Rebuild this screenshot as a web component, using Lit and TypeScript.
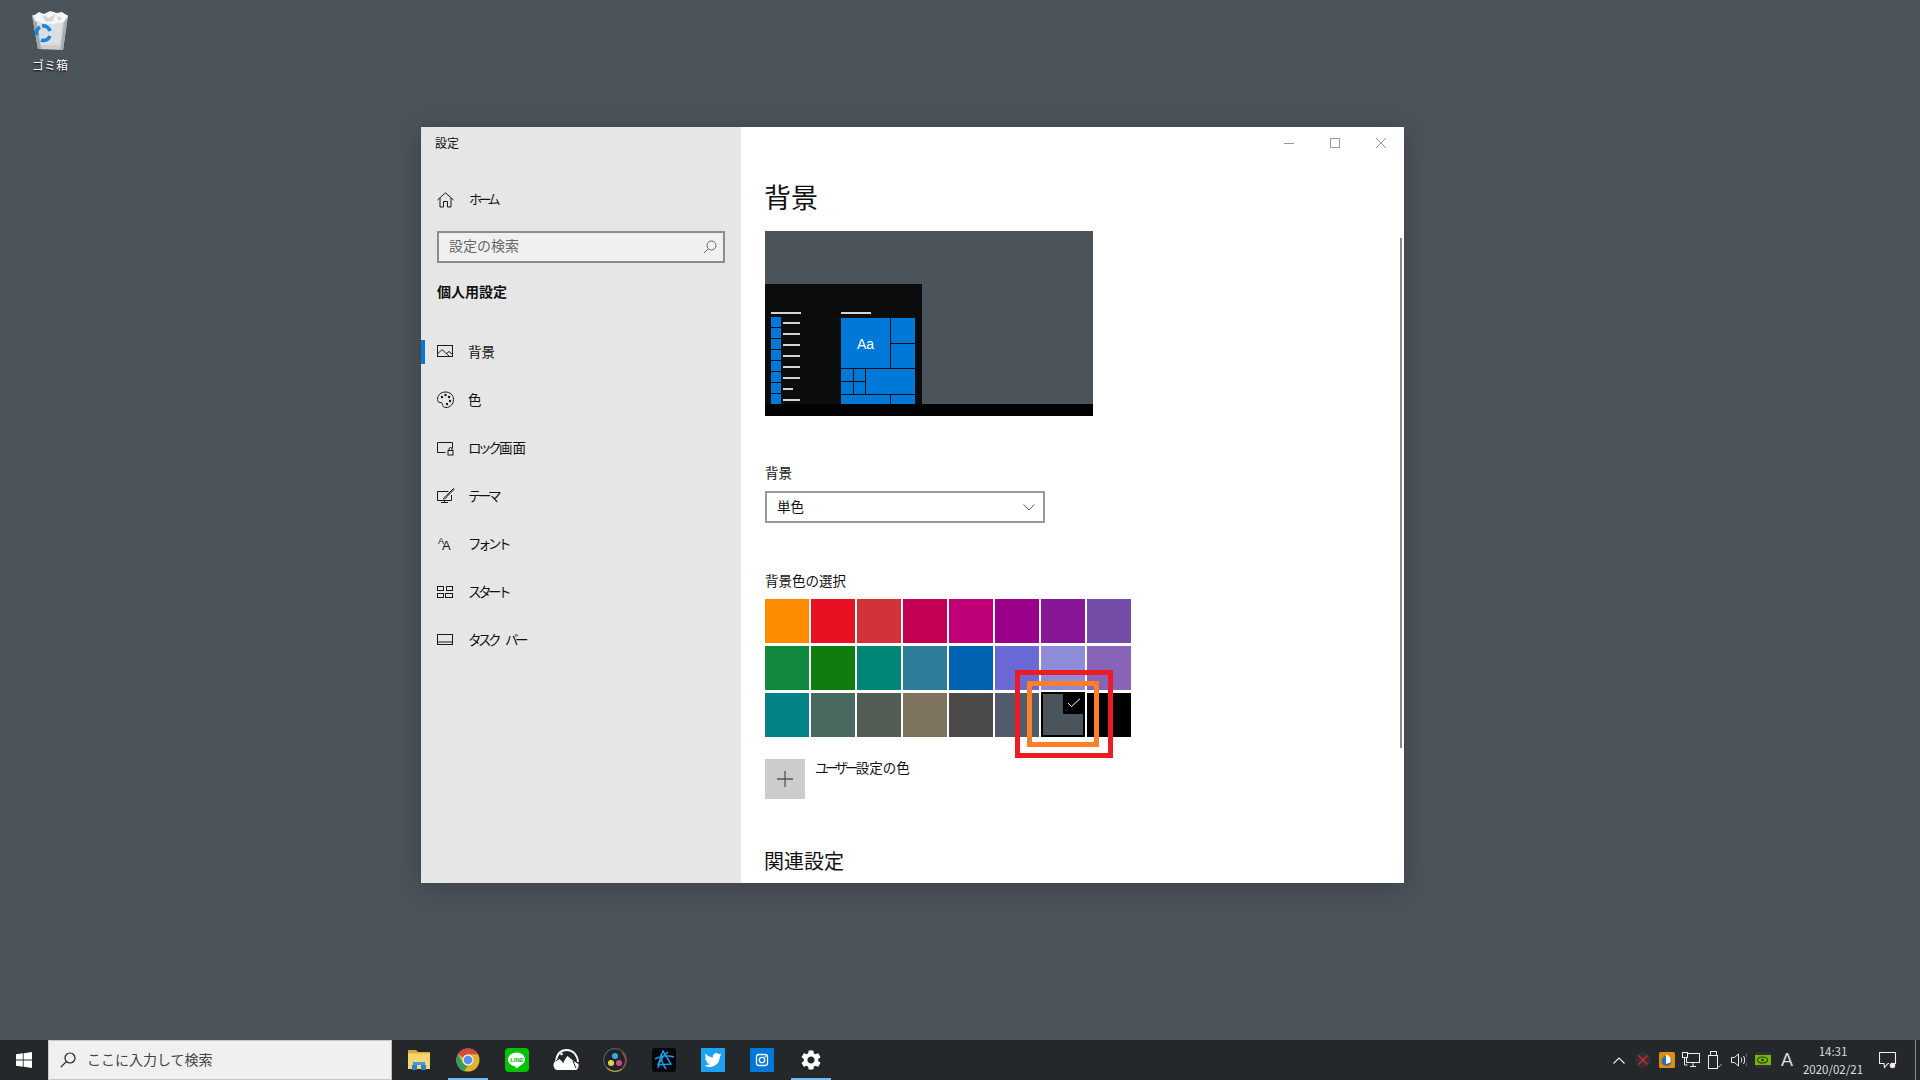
import { LitElement, html, css, svg } from "lit";
import { customElement } from "lit/decorators.js";

const SWATCHES = [
  "#ff8c00","#e81123","#d13438","#c30052","#bf0077","#9a0089","#881798","#744da9",
  "#10893e","#107c10","#018574","#2d7d9a","#0063b1","#6b69d6","#8e8cd8","#8764b8",
  "#038387","#486860","#525e54","#7e735f","#4c4a48","#515c6b","#4c545b","#000000",
];
const ic = (w: number, h: number, body: unknown) =>
  html`<svg width=${w} height=${h} viewBox="0 0 ${w} ${h}" fill="none" stroke="#1a1a1a" stroke-width="1">${body}</svg>`;

const NAV = [
  { label: html`背景`, active: true, icon: ic(18, 14, svg`<rect x=".5" y=".5" width="15" height="11"/><path d="M.5 9 5 4.500l7 6.500M9.500 8.500 12 6.500l3.500 3"/>`) },
  { label: html`色`, active: false, icon: ic(18, 18, svg`<path d="M8.500 1C4 1 .5 4 .5 8.500c0 2 1 3 2.500 3 1.700 0 2.500.5 2.500 2 0 2 1.500 3 3.500 3 4.500 0 7.500-3.500 7.500-8C16.500 4 13 1 8.500 1Z"/><g fill="#1a1a1a" stroke="none"><circle cx="5" cy="6" r="1.200"/><circle cx="8.500" cy="4" r="1.200"/><circle cx="12" cy="6" r="1.200"/><circle cx="13" cy="10" r="1.200"/><circle cx="10" cy="13" r="1.200"/></g>`) },
  { label: html`<span class="k">ロック</span>画面`, active: false, icon: ic(18, 16, svg`<path d="M8.500 12.500H.5v-10h15v6"/><rect x="11" y="10.500" width="5" height="4.500"/><path d="M12 10.500V9a1.500 1.500 0 0 1 3 0v1.500"/>`) },
  { label: html`<span class="k">テーマ</span>`, active: false, icon: ic(18, 16, svg`<path d="M11.500 3.500H.5v9h14V7M7.500 12.500v2M4 14.500h7"/><path d="M16.500 .5 8.500 8.500c-1 .5-2 1.500-2 2.500 1.500 0 2.500-.5 3-2l7.500-7.500Z"/>`) },
  { label: html`<span class="k">フォント</span>`, active: false, icon: html`<span class="aa"><i>A</i><b>A</b></span>` },
  { label: html`<span class="k">スタート</span>`, active: false, icon: ic(18, 12, svg`<rect x=".5" y=".5" width="6" height="4"/><rect x="9.500" y=".5" width="6" height="4"/><rect x=".5" y="7.500" width="6" height="4"/><rect x="8.500" y="7.500" width="7" height="4"/>`) },
  { label: html`<span class="k">タスク</span><span class="k sp">バー</span>`, active: false, icon: ic(18, 12, svg`<rect x=".5" y=".5" width="15" height="10"/><path d="M.5 8h15"/>`) },
];

@customElement("app-root")
export class AppRoot extends LitElement {
  static styles = css`
    :host { display: block; position: relative; width: 1920px; height: 1080px; overflow: hidden; background: #4c545b;
      font-family: "Noto Sans CJK JP", "Noto Sans", sans-serif; color: #111; }
    svg { display: block; flex: none; }
    .k { letter-spacing: -3.500px; margin-right: 1px; }
    .sp { margin-left: 6px; }

    .bin { position: absolute; left: 20px; top: 9px; width: 60px; display: flex; flex-direction: column; align-items: center; gap: 6px;
      color: #fff; font-size: 12px; line-height: 16px; text-shadow: 0 1px 2px #000; }

    .window { position: absolute; left: 421px; top: 127px; width: 983px; height: 756px; display: flex; background: #fff;
      box-shadow: 0 4px 24px rgba(0,0,0,.25); overflow: hidden; }
    .side { width: 320px; flex: none; background: #e6e6e6; display: flex; flex-direction: column; }
    .apptitle { height: 32px; padding-left: 14px; font-size: 12px; line-height: 32px; }
    .home { height: 48px; margin-top: 17px; display: flex; align-items: center; padding-left: 16px; gap: 14px; font-size: 13px; }
    .home .lbl { padding-bottom: 3px; }
    .search { margin: 7px 16px 0; height: 32px; box-sizing: border-box; border: 2px solid #8c8c8c; background: #f0f0f0; display: flex;
      align-items: center; justify-content: space-between; padding: 0 6px 0 10px; font-size: 14px; color: #666; }
    .search .ph { padding-bottom: 4px; }
    .section { margin: 14px 0 0 16px; height: 28px; line-height: 28px; font-size: 14px; font-weight: 700; color: #111; }
    .nav { margin-top: 23px; display: flex; flex-direction: column; }
    .item { position: relative; height: 48px; display: flex; align-items: center; padding-left: 16px; font-size: 13.500px; }
    .item .ico { width: 31px; flex: none; display: flex; }
    .item .lbl { padding-bottom: 2px; }
    .item.active::before { content: ""; position: absolute; left: 0; top: 12px; width: 4px; height: 24px; background: #0078d7; }
    .aa { position: relative; width: 16px; height: 14px; display: block; font-family: "Liberation Sans", sans-serif; color: #1a1a1a; }
    .aa i, .aa b { position: absolute; font-style: normal; font-weight: 400; line-height: 1; }
    .aa i { left: 1px; top: 0; font-size: 9px; }
    .aa b { left: 5px; top: 2px; font-size: 13px; }

    .main { position: relative; flex: 1; padding-left: 24px; min-width: 0; }
    .controls { position: absolute; top: 0; right: 0; display: flex; }
    .controls div { width: 46px; height: 32px; display: flex; align-items: center; justify-content: center; }
    .scroll { position: absolute; right: 2px; top: 111px; width: 2px; height: 510px; background: #8a8a8a; }
    h1 { margin: 48px 0 0 -1px; font-size: 27px; line-height: 44px; font-weight: 400; color: #111; height: 46px; }
    .preview { margin-top: 10px; width: 328px; height: 185px; background: #4c545b; display: flex; flex-direction: column; justify-content: flex-end; }
    .start { width: 157px; height: 120px; background: #0b0c0e; display: flex; padding: 28px 0 0 6px; box-sizing: border-box; overflow: hidden; }
    .bar { height: 12px; background: #020202; }
    .plist { width: 70px; flex: none; }
    .hd { width: 30px; height: 2px; background: #d4d4d4; margin-bottom: 3px; }
    .pl { display: flex; height: 11px; align-items: center; gap: 2px; }
    .pl i { width: 10px; height: 10px; background: #0078d7; display: block; margin-bottom: 1px; }
    .pl s { width: 17px; height: 2px; background: #d4d4d4; display: block; }
    .pl s.short { width: 10px; }
    .ptiles .hd { margin-bottom: 4px; }
    .tiles { display: grid; grid-template-columns: 12px 11px 24px 24px; grid-template-rows: 25px 24px 12px 12px 9px; gap: 1px; }
    .tiles div { background: #0078d7; }
    .t-aa { grid-column: 1 / 4; grid-row: 1 / 3; display: flex; align-items: center; justify-content: center; color: #fff; font-size: 14px;
      font-family: "Liberation Sans", sans-serif; padding-top: 1px; box-sizing: border-box; }
    .t-wide { grid-column: 3 / 5; grid-row: 3 / 5; }
    .t-b1 { grid-column: 1 / 4; }
    .label { font-size: 13.500px; line-height: 20px; color: #111; }
    .lb1 { margin-top: 46px; }
    .select { margin-top: 9px; width: 280px; height: 32px; box-sizing: border-box; border: 2px solid #999; display: flex; align-items: center;
      justify-content: space-between; padding: 0 8px 0 10px; font-size: 13.500px; }
    .select .v { padding-bottom: 2px; }
    .lb2 { margin-top: 47px; }
    .grid { position: relative; margin-top: 9px; width: 366px; display: grid; grid-template-columns: repeat(8, 44px); grid-auto-rows: 44px; column-gap: 2px; row-gap: 3px; }
    .sw { display: block; }
    .sw.sel { position: relative; box-sizing: border-box; border: 2px solid #000; margin-top: -1px; height: 45px; }
    .sw.sel span { position: absolute; right: -2px; top: -2px; width: 22px; height: 22px; background: #000; display: flex; align-items: center; justify-content: center; }
    .mark { position: absolute; box-sizing: border-box; border: 5px solid; }
    .red { left: 250px; top: 71px; width: 98px; height: 88px; border-color: #ed1c24; }
    .orange { left: 262px; top: 82px; width: 72px; height: 66px; border-color: #ff7f27; }
    .custom { margin-top: 22px; display: flex; gap: 10px; }
    .plus { width: 40px; height: 40px; background: #ccc; display: flex; align-items: center; justify-content: center; }
    .custom .txt { font-size: 13.500px; line-height: 17px; }
    h2 { margin: 46px 0 0 -1px; font-size: 20px; line-height: 32px; font-weight: 400; color: #111; }

    .taskbar { position: absolute; left: 0; right: 0; bottom: 0; height: 40px; background: #24282a; display: flex; align-items: stretch; }
    .win { width: 48px; flex: none; display: flex; align-items: center; justify-content: center; }
    .tsearch { width: 344px; flex: none; box-sizing: border-box; background: #f0f0f0; border: 1px solid #c8c8c8; border-right-color: #bbb; display: flex; align-items: center;
      gap: 11px; padding-left: 11px; font-size: 14px; color: #444; }
    .tsearch span { padding-bottom: 2px; }
    .apps { display: flex; margin-left: 2px; }
    .app { position: relative; width: 49px; display: flex; align-items: center; justify-content: center; padding-bottom: 1px; box-sizing: border-box; }
    .app.on::after { content: ""; position: absolute; left: 5px; bottom: 0; width: 40px; height: 2px; background: #76b9ed; }
    .tray { margin-left: auto; display: flex; align-items: center; color: #fff; }
    .ti { width: 24px; display: flex; align-items: center; justify-content: center; }
    .ime { font-family: "Liberation Sans", sans-serif; font-size: 18px; font-weight: 400; color: #ddd; }
    .clock { width: 68px; text-align: center; font-size: 11.500px; line-height: 18px; color: #ddd; box-sizing: border-box; }
    .notif { width: 42px; display: flex; justify-content: center; }
    .show { width: 11px; align-self: stretch; box-sizing: border-box; padding-left: 6px; display: flex; }
    .show i { width: 1px; background: #8a8d8f; display: block; }
  `;

  private bin() {
    return html`<svg width="40" height="42" viewBox="0 0 40 42">
      <path d="M2 6 38 6 33 41 8 40Z" fill="#c9cdd0"/>
      <path d="M2 6 8 40 11 40 6 8Z" fill="#a2a7ab"/>
      <path d="M33 41 38 6 35 8 30 41Z" fill="#a8adb1"/>
      <path d="M11 36 7 14l26-3-3 25Z" fill="#dcdfe1"/>
      <path d="M3 7 9 3l5 2 6-3 7 2 5-1 6 4-4 6-11 2-12-1-6-2Z" fill="#f4f5f6"/>
      <path d="M12 6l7 3 6-4-2 7-7 1ZM27 7l5 2-3 3Z" fill="#d2d5d8"/>
      <g fill="none" stroke="#1a86e0" stroke-width="3.600">
        <path d="M7 26a7 7 0 0 1 3-8"/><path d="M12 17a7 7 0 0 1 8 5"/><path d="M20 27a7 7 0 0 1-9 4"/>
      </g>
    </svg>`;
  }

  private explorer() {
    return html`<svg width="24" height="24" viewBox="0 0 24 24">
      <path d="M1 2h8l2 2H1Z" fill="#d9a43b"/>
      <rect x="1" y="4" width="22" height="17" fill="#f7d672"/>
      <rect x="1" y="4" width="22" height="1.500" fill="#e0b040"/>
      <path d="M6 17v-3h12v3Z" fill="#3d9be9"/>
      <rect x="5" y="17" width="5" height="5" fill="#2b7fd0"/>
      <rect x="14" y="17" width="5" height="5" fill="#2b7fd0"/>
    </svg>`;
  }
  private chrome() {
    return html`<svg width="24" height="24" viewBox="0 0 24 24">
      <circle cx="12" cy="12" r="11.500" fill="#e0b32c"/>
      <path d="M12 .5a11.500 11.500 0 0 1 10 5.750H12a5.750 5.750 0 0 0-5 2.900L2.100 6.200A11.500 11.500 0 0 1 12 .5Z" fill="#d04b3d"/>
      <path d="M2.100 6.200 7 15a5.750 5.750 0 0 0 5 2.800l-4.300 5.400A11.500 11.500 0 0 1 2.100 6.200Z" fill="#3d9a56"/>
      <circle cx="12" cy="12" r="5.500" fill="#eee"/><circle cx="12" cy="12" r="4.300" fill="#5b8def"/>
    </svg>`;
  }
  private line() {
    return html`<svg width="24" height="24" viewBox="0 0 24 24">
      <rect width="24" height="24" rx="4" fill="#00c300"/>
      <path d="M12 4.500c-5 0-9 3-9 6.900 0 3.400 3 6.200 7 6.800.8.200.7.600.5 1.800 0 .4.300.6.800.3 1.500-.8 5-3 7.100-5.100 1.400-1.400 1.600-2.700 1.600-3.800 0-3.900-3.900-6.900-8-6.900Z" fill="#fff"/>
      <text x="12" y="13.500" text-anchor="middle" font-size="6" font-weight="700" fill="#00c300" font-family="Liberation Sans, sans-serif">LINE</text>
    </svg>`;
  }
  private mountain() {
    return html`<svg width="26" height="24" viewBox="0 0 26 24">
      <path d="M3 13C4 6 8 2 13.500 2 20 2 24.500 7 25 14" fill="none" stroke="#fff" stroke-width="1.800"/>
      <path d="M.5 17c0-2 1-3 2-4l4-2 3 3 5-6 6 5 5 3c.5 4-1.500 6-3 6H5c-3 0-4.500-2-4.500-5Z" fill="#fff"/>
      <path d="M3 13 9 8M13 7l-3 8M20 13l3 7" stroke="#24282a" stroke-width="1" fill="none"/>
      <circle cx="8.500" cy="6" r="1.300" fill="#fff"/>
    </svg>`;
  }
  private davinci() {
    return html`<svg width="24" height="24" viewBox="0 0 24 24">
      <circle cx="12" cy="12" r="11.300" fill="#1e2428" stroke="#4f5a66" stroke-width="1.200"/>
      <path d="M19 4.500A11.300 11.300 0 0 1 20 20" fill="none" stroke="#a04a4a" stroke-width="1.200"/>
      <path d="M4 20a11.300 11.300 0 0 0 15 1" fill="none" stroke="#b09a3a" stroke-width="1.200"/>
      <circle cx="12" cy="8" r="3" fill="#3fa6e0"/><circle cx="8" cy="15" r="3" fill="#e8d44a"/><circle cx="16" cy="15" r="3" fill="#d9487a"/>
    </svg>`;
  }
  private battle() {
    return html`<svg width="24" height="24" viewBox="0 0 24 24">
      <rect width="24" height="24" rx="3" fill="#03060a"/>
      <g fill="none" stroke="#1c9be6" stroke-width="1.500">
        <path d="M11 3 6 17l13-1L11 3Z"/><path d="M3 11c5-3 13-4 19-2M6 20c1-6 5-13 10-16M14 21c-3-4-5-10-5-15"/>
      </g>
    </svg>`;
  }
  private twitter() {
    return html`<svg width="24" height="24" viewBox="0 0 24 24">
      <rect width="24" height="24" fill="#1da1f2"/>
      <g transform="translate(3.500 3.500) scale(.71)"><path fill="#fff" d="M23.953 4.570a10 10 0 01-2.825.775 4.958 4.958 0 002.163-2.723c-.951.555-2.005.959-3.127 1.184a4.920 4.920 0 00-8.384 4.482C7.690 8.095 4.067 6.130 1.640 3.162a4.822 4.822 0 00-.666 2.475c0 1.710.870 3.213 2.188 4.096a4.904 4.904 0 01-2.228-.616v.060a4.923 4.923 0 003.946 4.827 4.996 4.996 0 01-2.212.085 4.936 4.936 0 004.604 3.417 9.867 9.867 0 01-6.102 2.105c-.390 0-.779-.023-1.170-.067a13.995 13.995 0 007.557 2.209c9.053 0 13.998-7.496 13.998-13.985 0-.210 0-.420-.015-.630A9.935 9.935 0 0024 4.590z"/></g>
    </svg>`;
  }
  private insta() {
    return html`<svg width="24" height="24" viewBox="0 0 24 24">
      <rect width="24" height="24" fill="#0078d7"/>
      <rect x="6.500" y="6.500" width="11" height="11" rx="2.500" fill="none" stroke="#fff" stroke-width="1.300"/>
      <circle cx="12" cy="12" r="2.700" fill="none" stroke="#fff" stroke-width="1.300"/>
      <circle cx="15.200" cy="8.800" r=".7" fill="#fff"/>
    </svg>`;
  }
  private gear() {
    return html`<svg width="24" height="24" viewBox="0 0 24 24"><path fill="#fff" fill-rule="evenodd" d="M19.140 12.940c.04-.3.060-.610.060-.940 0-.320-.020-.640-.070-.940l2.030-1.580a.49.49 0 0 0 .120-.610l-1.920-3.320a.488.488 0 0 0-.590-.220l-2.390.960c-.5-.380-1.030-.7-1.620-.940l-.360-2.540a.484.484 0 0 0-.480-.410h-3.840c-.240 0-.430.170-.470.410l-.360 2.540c-.590.240-1.130.570-1.620.940l-2.390-.960c-.220-.080-.470 0-.590.220L2.740 8.870c-.120.210-.080.470.120.610l2.030 1.580c-.050.3-.090.630-.090.940s.020.640.07.940l-2.030 1.580a.49.49 0 0 0-.120.610l1.920 3.320c.120.220.370.290.590.220l2.390-.960c.5.380 1.030.7 1.620.94l.36 2.54c.05.24.24.41.48.41h3.84c.24 0 .44-.17.47-.41l.36-2.54c.59-.24 1.13-.56 1.62-.94l2.39.96c.22.08.47 0 .59-.22l1.920-3.32c.12-.22.07-.47-.12-.61l-2.01-1.58zM12 15.600c-1.980 0-3.600-1.620-3.600-3.600s1.620-3.600 3.600-3.600 3.600 1.620 3.600 3.600-1.620 3.600-3.600 3.600z"/></svg>`;
  }

  render() {
    const apps: [unknown, boolean][] = [
      [this.explorer(), false], [this.chrome(), true], [this.line(), false], [this.mountain(), false],
      [this.davinci(), false], [this.battle(), false], [this.twitter(), false], [this.insta(), false], [this.gear(), true],
    ];
    return html`
      <div class="bin">${this.bin()}<span>ゴミ箱</span></div>

      <div class="window">
        <aside class="side">
          <div class="apptitle">設定</div>
          <div class="home">
            ${ic(18, 16, svg`<path d="M.5 8 8.500 .8 16.500 8M3 6v9h3.500v-5.500h4V15H14V6"/>`)}
            <span class="lbl"><span class="k">ホーム</span></span>
          </div>
          <div class="search">
            <span class="ph">設定の検索</span>
            <svg width="14" height="14" viewBox="0 0 14 14" fill="none" stroke="#666"><circle cx="8.500" cy="5.500" r="4.500"/><path d="M5.200 8.800 .8 13.200"/></svg>
          </div>
          <div class="section">個人用設定</div>
          <nav class="nav">
            ${NAV.map(n => html`<div class="item ${n.active ? "active" : ""}"><span class="ico">${n.icon}</span><span class="lbl">${n.label}</span></div>`)}
          </nav>
        </aside>
        <main class="main">
          <div class="controls">
            <div><svg width="10" height="10" viewBox="0 0 10 10"><path d="M0 5.500h10" stroke="#999"/></svg></div>
            <div><svg width="10" height="10" viewBox="0 0 10 10" fill="none"><rect x=".5" y=".5" width="9" height="9" stroke="#999"/></svg></div>
            <div><svg width="10" height="10" viewBox="0 0 10 10"><path d="M0 0l10 10M10 0 0 10" stroke="#999"/></svg></div>
          </div>
          <div class="scroll"></div>
          <h1>背景</h1>
          <div class="preview">
            <div class="start">
              <div class="plist">
                <div class="hd"></div>
                ${[0,1,2,3,4,5,6,7].map(i => html`<div class="pl"><i></i><s class=${i === 6 ? "short" : ""}></s></div>`)}
              </div>
              <div class="ptiles">
                <div class="hd"></div>
                <div class="tiles">
                  <div class="t-aa">Aa</div><div></div><div></div>
                  <div></div><div></div><div class="t-wide"></div>
                  <div></div><div></div>
                  <div class="t-b1"></div><div></div>
                </div>
              </div>
            </div>
            <div class="bar"></div>
          </div>
          <div class="label lb1">背景</div>
          <div class="select"><span class="v">単色</span>
            <svg width="12" height="7" viewBox="0 0 12 7" fill="none" stroke="#666"><path d="M.5.5 6 6l5.500-5.500"/></svg>
          </div>
          <div class="label lb2">背景色の選択</div>
          <div class="grid">
            ${SWATCHES.map((c, i) => i === 22
              ? html`<div class="sw sel" style="background:${c}"><span><svg width="14" height="10" viewBox="0 0 14 10" fill="none" stroke="#fff" stroke-width="1"><path d="M1 5l3.500 3.500L13 .8"/></svg></span></div>`
              : html`<div class="sw" style="background:${c}"></div>`)}
            <div class="mark red"></div>
            <div class="mark orange"></div>
          </div>
          <div class="custom">
            <div class="plus"><svg width="16" height="16" viewBox="0 0 16 16"><path d="M8 0v16M0 8h16" stroke="#555" stroke-width="1.300"/></svg></div>
            <div class="txt"><span class="k">ユーザー</span>設定の色</div>
          </div>
          <h2>関連設定</h2>
        </main>
      </div>

      <div class="taskbar">
        <div class="win"><svg width="16" height="16" viewBox="0 0 16 16" fill="#fff"><path d="M0 2.300 6.800 1.300V7.600H0ZM7.600 1.200 16 0V7.600H7.600ZM0 8.400H6.800V14.700L0 13.700ZM7.600 8.400H16V16L7.600 14.800Z"/></svg></div>
        <div class="tsearch">
          <svg width="16" height="16" viewBox="0 0 16 16" fill="none" stroke="#222" stroke-width="1.200"><circle cx="10" cy="6" r="5"/><path d="M6.300 9.700 .8 15.200"/></svg>
          <span>ここに入力して検索</span>
        </div>
        <div class="apps">
          ${apps.map(([ico, on]) => html`<div class="app ${on ? "on" : ""}">${ico}</div>`)}
        </div>
        <div class="tray">
          <div class="ti"><svg width="12" height="7" viewBox="0 0 12 7" fill="none" stroke="#eee" stroke-width="1.200"><path d="M.5 6.500 6 1l5.500 5.500"/></svg></div>
          <div class="ti"><svg width="16" height="16" viewBox="0 0 16 16"><circle cx="8" cy="8" r="8" fill="#2e3234"/><path d="M3.500 3.500l9 9M12.500 3.500l-9 9" stroke="#e8202a" stroke-width="1.300"/></svg></div>
          <div class="ti"><svg width="16" height="16" viewBox="0 0 16 16"><rect width="16" height="16" rx="1.500" fill="#e08a10"/><circle cx="7.500" cy="9" r="5" fill="#2c6fb0"/><path d="M7 2.500c4 1 5.500 4 4.500 8L7 12Z" fill="#fff"/></svg></div>
          <div class="ti"><svg width="18" height="16" viewBox="0 0 18 16" fill="none" stroke="#eee"><rect x="4.500" y="1.500" width="13" height="9"/><rect x=".5" y=".5" width="5" height="5" fill="#24282a"/><path d="M2.500 6v7h3M11 11v3M8 14.500h6"/></svg></div>
          <div class="ti"><svg width="14" height="18" viewBox="0 0 14 18" fill="none" stroke="#eee"><rect x="2.500" y=".5" width="6" height="4"/><rect x=".5" y="4.500" width="9" height="13"/><path d="M9.500 14.500l1.500 1.500 2.500-3" stroke="#aaa"/></svg></div>
          <div class="ti"><svg width="16" height="14" viewBox="0 0 16 14" fill="none" stroke="#eee"><path d="M.5 4.500h3L7.500 1v12l-4-3.500h-3Z"/><path d="M10 4.500c1 1.500 1 3.500 0 5M12.500 3c1.500 2.500 1.500 5.500 0 8"/><path d="M15 1c2 3.500 2 8.500 0 12" stroke="#888"/></svg></div>
          <div class="ti"><svg width="16" height="16" viewBox="0 0 16 16"><rect width="16" height="16" rx="1" fill="#2d3338"/><rect x="0" y="3" width="16" height="10" fill="#76b900"/><ellipse cx="7.500" cy="8" rx="5" ry="3" fill="none" stroke="#2d3338" stroke-width="1.200"/><circle cx="7.500" cy="8" r="1.300" fill="#2d3338"/></svg></div>
          <div class="ti ime">A</div>
          <div class="clock"><div>14:31</div><div>2020/02/21</div></div>
          <div class="notif"><svg width="18" height="17" viewBox="0 0 18 17" fill="none" stroke="#eee" stroke-width="1.100"><path d="M12 11.500h4.500V.5H.5v11H5l.5 4L9 11.500h1"/><circle cx="13.500" cy="13.500" r="2.200" fill="#eee"/></svg></div>
          <div class="show"><i></i></div>
        </div>
      </div>
    `;
  }
}
